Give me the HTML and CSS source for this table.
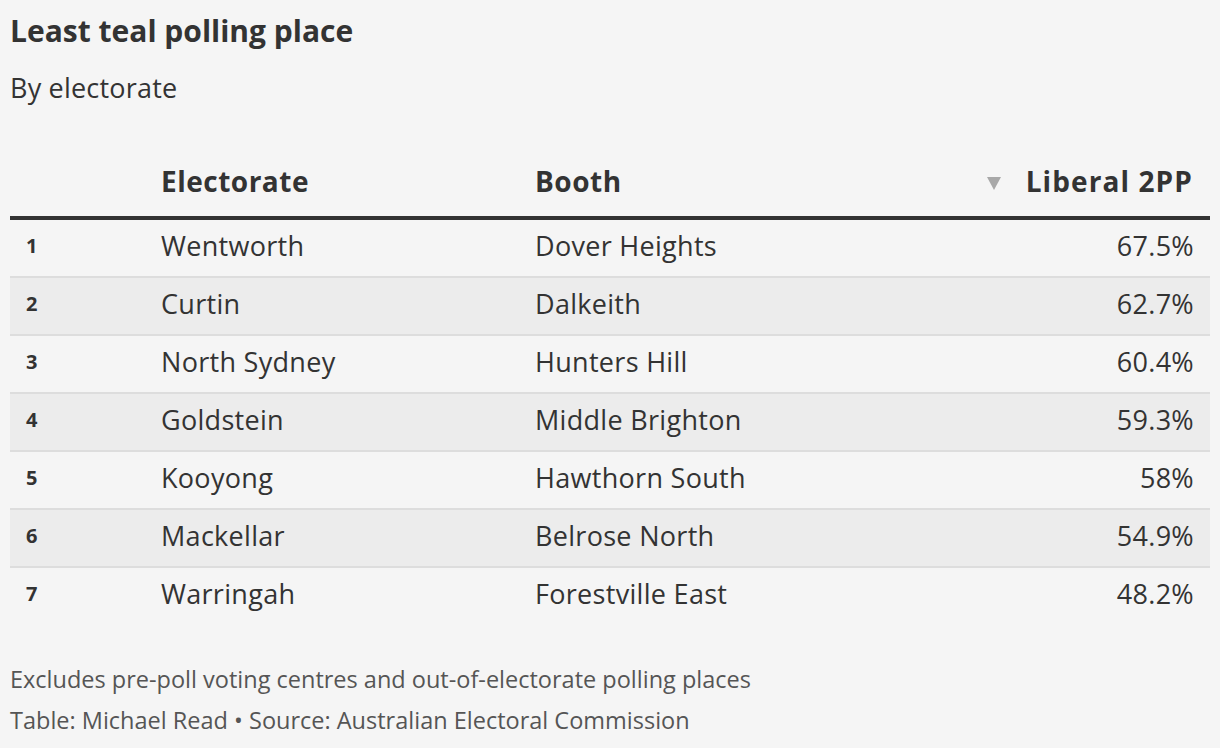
FILE: index.html
```html
<!DOCTYPE html>
<html lang="en">
<head>
<meta charset="utf-8">
<title>Least teal polling place</title>
<link rel="stylesheet" href="styles.css">
</head>
<body>
<div class="chart">
  <h1 class="title">Least teal polling place</h1>
  <p class="subtitle">By electorate</p>
  <table class="data">
    <colgroup>
      <col class="c-rank">
      <col class="c-elect">
      <col class="c-booth">
      <col class="c-val">
    </colgroup>
    <thead>
      <tr>
        <th class="rank"></th>
        <th>Electorate</th>
        <th>Booth</th>
        <th class="num"><span class="sort"></span>Liberal 2PP</th>
      </tr>
    </thead>
    <tbody>
      <tr><td class="rank">1</td><td>Wentworth</td><td>Dover Heights</td><td class="num">67.5%</td></tr>
      <tr><td class="rank">2</td><td>Curtin</td><td>Dalkeith</td><td class="num">62.7%</td></tr>
      <tr><td class="rank">3</td><td>North Sydney</td><td>Hunters Hill</td><td class="num">60.4%</td></tr>
      <tr><td class="rank">4</td><td>Goldstein</td><td>Middle Brighton</td><td class="num">59.3%</td></tr>
      <tr><td class="rank">5</td><td>Kooyong</td><td>Hawthorn South</td><td class="num">58%</td></tr>
      <tr><td class="rank">6</td><td>Mackellar</td><td>Belrose North</td><td class="num">54.9%</td></tr>
      <tr><td class="rank">7</td><td>Warringah</td><td>Forestville East</td><td class="num">48.2%</td></tr>
    </tbody>
  </table>
  <div class="footer">
    <p class="note">Excludes pre-poll voting centres and out-of-electorate polling places</p>
    <p class="source">Table: Michael Read • Source: Australian Electoral Commission</p>
  </div>
</div>
</body>
</html>
```

FILE: styles.css
```css
html, body {
  margin: 0;
  padding: 0;
  background: #f5f5f5;
}

body {
  font-family: "Open Sans", "Noto Sans", "DejaVu Sans", sans-serif;
  color: #333333;
}

.chart {
  padding: 11px 10px 0 10px;
}

.title {
  margin: 0;
  font-size: 30px;
  line-height: 40px;
  font-weight: 700;
  color: #333333;
}

.subtitle {
  margin: 19px 0 0 0;
  font-size: 27px;
  line-height: 36px;
  font-weight: 400;
  letter-spacing: 0.2px;
  color: #333333;
}

.data {
  width: 1200px;
  border-collapse: collapse;
  table-layout: fixed;
  margin-top: 42px;
}

.c-rank { width: 135px; }
.c-elect { width: 374px; }
.c-val { width: 320px; }

.data th {
  font-size: 28px;
  line-height: 32px;
  font-weight: 700;
  letter-spacing: 0.5px;
  text-align: left;
  padding: 17px 16px 19px 16px;
  border-bottom: 4px solid #333333;
  color: #333333;
  white-space: nowrap;
}

.data td {
  font-size: 27px;
  line-height: 32px;
  letter-spacing: 0.3px;
  padding: 10px 16px 14px 16px;
  vertical-align: top;
  border-bottom: 2px solid #dddddd;
  color: #333333;
  white-space: nowrap;
}

.data tbody tr:last-child td {
  border-bottom: none;
}

.data tbody tr:nth-child(even) td {
  background: #ececec;
}

.data td.rank {
  font-size: 20px;
  font-weight: 700;
  letter-spacing: 0;
}

.data .num {
  text-align: right;
}

.data th.num {
  padding-right: 17px;
  letter-spacing: 1.1px;
}

.sort {
  display: inline-block;
  width: 0;
  height: 0;
  border-left: 7.5px solid transparent;
  border-right: 7.5px solid transparent;
  border-top: 13px solid #a8a8a8;
  margin-right: 25px;
  vertical-align: 2px;
}

.footer {
  margin-top: 35px;
  color: #555555;
  font-size: 23.5px;
  line-height: 41px;
}

.footer p {
  margin: 0;
}
```
